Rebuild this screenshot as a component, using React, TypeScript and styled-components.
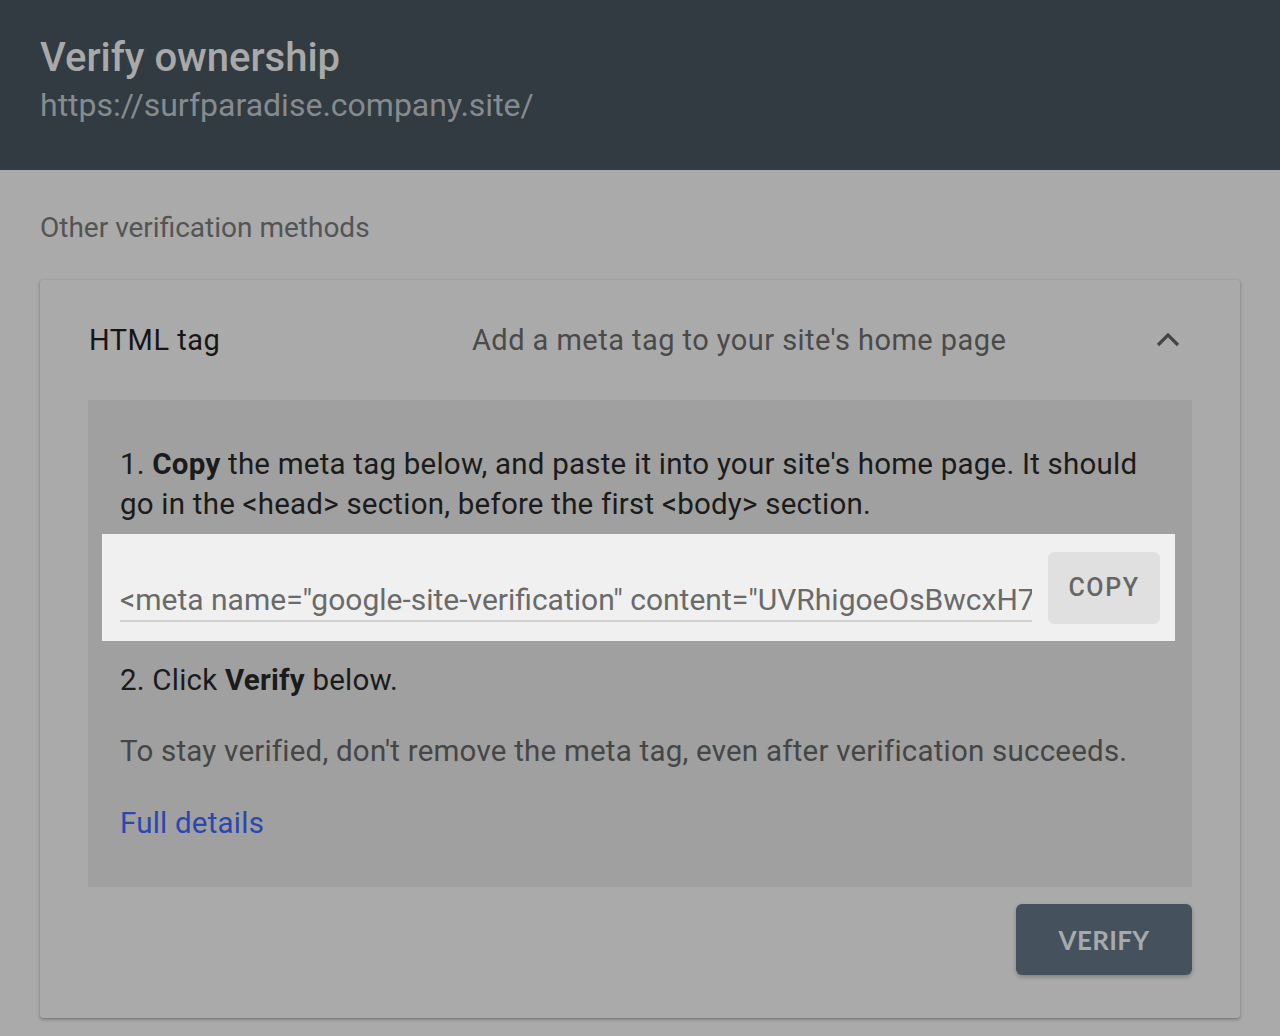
import React from "react";
import styled, { createGlobalStyle } from "styled-components";

const Global = createGlobalStyle`
  html, body { margin: 0; padding: 0; background: #aaaaaa; }
  body { font-family: Roboto, "Noto Sans", "Liberation Sans", sans-serif; }
  * { box-sizing: border-box; }
`;

const Page = styled.div`
  width: 1280px;
  min-height: 1036px;
  background: #aaaaaa;
  overflow: hidden;
`;

const Header = styled.header`
  height: 170px;
  background: #323b42;
  padding: 35px 40px 0;
  display: flex;
  flex-direction: column;
`;

const Title = styled.h1`
  margin: 0;
  font-family: Roboto, sans-serif;
  font-weight: 500;
  font-size: 40px;
  line-height: 46px;
  color: #a9a9a9;
`;

const Url = styled.div`
  margin-top: 5px;
  font-size: 32px;
  line-height: 38px;
  color: #868b8f;
  font-weight: 400;
`;

const Main = styled.main`
  padding: 40px 40px 0;
`;

const SectionLabel = styled.div`
  font-size: 28px;
  line-height: 36px;
  color: #545454;
  margin-bottom: 34px;
`;

const Card = styled.section`
  background: #aaaaaa;
  border-radius: 3px;
  box-shadow: 0 1px 3px rgba(0, 0, 0, 0.25), 0 2px 4px rgba(0, 0, 0, 0.12);
  padding: 0 48px 42px;
  height: 738px;
`;

const CardHead = styled.div`
  height: 120px;
  display: grid;
  grid-template-columns: 383px 1fr 40px;
  align-items: center;
  padding-left: 1px;
`;

const MethodName = styled.div`
  font-size: 29px;
  letter-spacing: 0.5px;
  color: #161616;
`;

const MethodDesc = styled.div`
  font-size: 29px;
  letter-spacing: 0.45px;
  color: #4a4a4a;
`;

const Chevron = styled.svg`
  justify-self: end;
  margin-right: 9px;
`;

const Panel = styled.div`
  background: #a0a0a0;
  padding: 44px 17px 44px 14px;
  display: flex;
  flex-direction: column;
`;

const Step = styled.p<{ $muted?: boolean }>`
  margin: 0;
  padding: 0 18px;
  font-size: 29.5px;
  line-height: 40px;
  letter-spacing: 0.22px;
  color: ${(p) => (p.$muted ? "#464646" : "#1b1b1b")};
  b { font-weight: 700; }
`;

const CodeBox = styled.div`
  margin: 10px 0 19px;
  background: #f0f0f0;
  height: 107px;
  display: flex;
  align-items: center;
  padding: 0 15px 0 18px;
  gap: 16px;
`;

const CodeField = styled.div`
  flex: 1;
  align-self: flex-end;
  margin-bottom: 19px;
  border-bottom: 2px solid #cfcfcf;
  font-size: 30px;
  line-height: 40px;
  color: #6a6a6a;
  white-space: nowrap;
  overflow: hidden;
`;

const CopyButton = styled.button`
  width: 112px;
  height: 72px;
  flex: none;
  border: none;
  border-radius: 6px;
  background: #e0e0e0;
  color: #666666;
  font-family: Roboto, sans-serif;
  font-weight: 500;
  font-size: 25px;
  letter-spacing: 1.6px;
  padding: 0;
`;

const Note = styled(Step)`
  margin-top: 31px;
`;

const Link = styled.a`
  display: block;
  margin-top: 32px;
  padding: 0 18px;
  font-size: 29.5px;
  line-height: 40px;
  letter-spacing: 0.22px;
  color: #2b47b0;
  text-decoration: none;
`;

const Actions = styled.div`
  display: flex;
  justify-content: flex-end;
  padding-top: 17px;
`;

const VerifyButton = styled.button`
  width: 176px;
  height: 71px;
  border: none;
  border-radius: 6px;
  background: #45525e;
  color: #a7a9ab;
  font-family: Lato, Roboto, sans-serif;
  font-weight: 700;
  font-size: 26px;
  letter-spacing: 0.3px;
  box-shadow: 0 2px 4px rgba(0, 0, 0, 0.25);
`;

export default function App() {
  return (
    <Page>
      <Global />
      <Header>
        <Title>Verify ownership</Title>
        <Url>https://surfparadise.company.site/</Url>
      </Header>
      <Main>
        <SectionLabel>Other verification methods</SectionLabel>
        <Card>
          <CardHead>
            <MethodName>HTML tag</MethodName>
            <MethodDesc>Add a meta tag to your site's home page</MethodDesc>
            <Chevron width="30" height="20" viewBox="0 0 30 20">
              <path d="M5 15 L15 5 L25 15" fill="none" stroke="#454545" strokeWidth="3.2" />
            </Chevron>
          </CardHead>
          <Panel>
            <Step>
              1. <b>Copy</b> the meta tag below, and paste it into your site's home page. It should go in
              the &lt;head&gt; section, before the first &lt;body&gt; section.
            </Step>
            <CodeBox>
              <CodeField>
                &lt;meta name="google-site-verification" content="UVRhigoeOsBwcxH7Yq2kLmN8pZr4"
                /&gt;
              </CodeField>
              <CopyButton>COPY</CopyButton>
            </CodeBox>
            <Step>
              2. Click <b>Verify</b> below.
            </Step>
            <Note $muted>
              To stay verified, don't remove the meta tag, even after verification succeeds.
            </Note>
            <Link href="#">Full details</Link>
          </Panel>
          <Actions>
            <VerifyButton>VERIFY</VerifyButton>
          </Actions>
        </Card>
      </Main>
    </Page>
  );
}
